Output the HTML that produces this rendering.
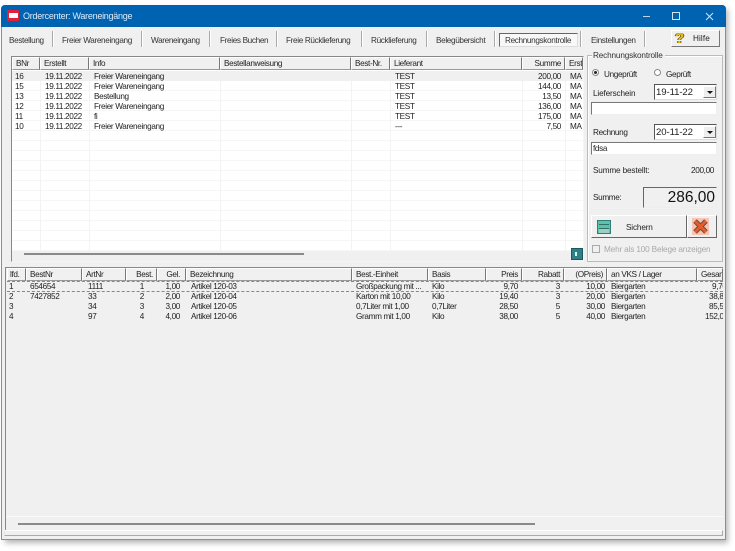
<!DOCTYPE html>
<html><head><meta charset="utf-8"><style>
html,body{margin:0;padding:0;width:735px;height:551px;background:#fff;overflow:hidden}
body{position:relative;font:8.2px/11px "Liberation Sans",sans-serif;letter-spacing:-.35px;color:#222}
#w{position:absolute;left:0;top:0;width:735px;height:551px;filter:blur(.3px);overflow:hidden}
div,span.a{position:absolute}
.t{position:absolute;white-space:nowrap}
.r{text-align:right}
.w{letter-spacing:-.15px}
.h{position:absolute;background:#f0f0f0;border:1px solid;border-color:#fff #777 #999 #fff;box-sizing:border-box;white-space:nowrap;overflow:hidden;padding-left:3px;line-height:12px}
.tab{position:absolute;top:35px;white-space:nowrap;color:#333}
.sep{position:absolute;top:31px;height:16px;width:1px;background:#aaa;border-right:1px solid #fff}
.vl{position:absolute;width:1px;background:#f3f3f3}
</style></head><body><div id="w">
<div style="left:5px;top:9px;width:723px;height:534px;background:#777;filter:blur(3px);opacity:.55"></div>
<div style="left:1px;top:5px;width:725px;height:535px;background:#f0f0f0;border:1px solid #5a9bd0;box-sizing:border-box;border-radius:4px 4px 0 0"></div>
<div style="left:1px;top:5px;width:725px;height:22px;background:#0063b1;border-radius:4px 4px 0 0"></div>
<div style="left:7px;top:10px;width:12px;height:11px;background:#e3203a;border-radius:1px"></div>
<div style="left:9px;top:13px;width:9px;height:5px;background:#fff"></div>
<span class="t" style="left:23px;top:11px;color:#dfeaf5;font-size:9px;letter-spacing:-.27px">Ordercenter: Wareneingänge</span>
<div style="left:643px;top:16px;width:7px;height:1px;background:#bcd3e8"></div>
<div style="left:672px;top:12px;width:6px;height:6px;border:1px solid #d5e3f0"></div>
<svg style="position:absolute;left:705px;top:12px" width="9" height="9"><path d="M1 1L8 8M8 1L1 8" stroke="#d5e3f0" stroke-width="1"/></svg>

<span class="tab" style="left:9px">Bestellung</span><div class="sep" style="left:52px"></div>
<span class="tab" style="left:62px">Freier Wareneingang</span><div class="sep" style="left:141px"></div>
<span class="tab" style="left:151px">Wareneingang</span><div class="sep" style="left:209px"></div>
<span class="tab" style="left:220px">Freies Buchen</span><div class="sep" style="left:276px"></div>
<span class="tab" style="left:286px">Freie Rücklieferung</span><div class="sep" style="left:361px"></div>
<span class="tab" style="left:371px">Rücklieferung</span><div class="sep" style="left:426px"></div>
<span class="tab" style="left:436px">Belegübersicht</span><div class="sep" style="left:494px"></div>
<div style="left:499px;top:33px;width:79px;height:14px;background:#f8f8f8;border:1px solid;border-color:#666 #ddd #ddd #666;box-sizing:border-box"></div>
<span class="tab" style="left:505px;top:35px">Rechnungskontrolle</span><div class="sep" style="left:580px"></div>
<span class="tab" style="left:591px">Einstellungen</span><div class="sep" style="left:644px"></div>
<div style="left:671px;top:30px;width:49px;height:17px;background:#f0f0f0;border:1px solid;border-color:#fff #777 #777 #fff;box-sizing:border-box"></div>
<span class="t" style="left:675px;top:31px;color:#e8c020;font:bold 15px/15px 'Liberation Sans',sans-serif;text-shadow:1px 0 0 #6a5a10,-1px 0 0 #6a5a10">?</span>
<span class="t" style="left:693px;top:33px;color:#222;letter-spacing:.1px">Hilfe</span>

<!-- top grid -->
<div style="left:11px;top:56px;width:573px;height:206px;background:#fff;border:1px solid;border-color:#888 #f5f5f5 #f5f5f5 #888;box-sizing:border-box"></div>
<div style="left:12px;top:81px;width:571px;height:170px;background:repeating-linear-gradient(to bottom,#fff 0,#fff 9px,#f6f6f6 9px,#f6f6f6 10px)"></div>
<div style="left:12px;top:71px;width:571px;height:10px;background:#f0f0f0"></div>
<div class="vl" style="left:40px;top:81px;height:170px"></div>
<div class="vl" style="left:89px;top:81px;height:170px"></div>
<div class="vl" style="left:220px;top:81px;height:170px"></div>
<div class="vl" style="left:351px;top:81px;height:170px"></div>
<div class="vl" style="left:390px;top:81px;height:170px"></div>
<div class="vl" style="left:522px;top:81px;height:170px"></div>
<div class="vl" style="left:565px;top:81px;height:170px"></div>
<div class="h" style="left:12px;top:57px;width:28px;height:13px">BNr</div>
<div class="h" style="left:40px;top:57px;width:49px;height:13px">Erstellt</div>
<div class="h" style="left:89px;top:57px;width:131px;height:13px">Info</div>
<div class="h" style="left:220px;top:57px;width:131px;height:13px">Bestellanweisung</div>
<div class="h" style="left:351px;top:57px;width:39px;height:13px">Best-Nr.</div>
<div class="h" style="left:390px;top:57px;width:132px;height:13px">Lieferant</div>
<div class="h" style="left:522px;top:57px;width:43px;height:13px;text-align:right;padding-right:3px">Summe</div>
<div class="h" style="left:565px;top:57px;width:18px;height:13px">Erst</div>

<span class="t" style="left:15px;top:71px">16</span><span class="t" style="left:45px;top:71px">19.11.2022</span><span class="t" style="left:94px;top:71px">Freier Wareneingang</span><span class="t" style="left:395px;top:71px">TEST</span><span class="t r" style="right:174px;top:71px">200,00</span><span class="t" style="left:570px;top:71px">MA</span>
<span class="t" style="left:15px;top:81px">15</span><span class="t" style="left:45px;top:81px">19.11.2022</span><span class="t" style="left:94px;top:81px">Freier Wareneingang</span><span class="t" style="left:395px;top:81px">TEST</span><span class="t r" style="right:174px;top:81px">144,00</span><span class="t" style="left:570px;top:81px">MA</span>
<span class="t" style="left:15px;top:91px">13</span><span class="t" style="left:45px;top:91px">19.11.2022</span><span class="t" style="left:94px;top:91px">Bestellung</span><span class="t" style="left:395px;top:91px">TEST</span><span class="t r" style="right:174px;top:91px">13,50</span><span class="t" style="left:570px;top:91px">MA</span>
<span class="t" style="left:15px;top:101px">12</span><span class="t" style="left:45px;top:101px">19.11.2022</span><span class="t" style="left:94px;top:101px">Freier Wareneingang</span><span class="t" style="left:395px;top:101px">TEST</span><span class="t r" style="right:174px;top:101px">136,00</span><span class="t" style="left:570px;top:101px">MA</span>
<span class="t" style="left:15px;top:111px">11</span><span class="t" style="left:45px;top:111px">19.11.2022</span><span class="t" style="left:94px;top:111px">fi</span><span class="t" style="left:395px;top:111px">TEST</span><span class="t r" style="right:174px;top:111px">175,00</span><span class="t" style="left:570px;top:111px">MA</span>
<span class="t" style="left:15px;top:121px">10</span><span class="t" style="left:45px;top:121px">19.11.2022</span><span class="t" style="left:94px;top:121px">Freier Wareneingang</span><span class="t" style="left:395px;top:121px">---</span><span class="t r" style="right:174px;top:121px">7,50</span><span class="t" style="left:570px;top:121px">MA</span>

<div style="left:12px;top:251px;width:571px;height:10px;background:#f0f0f0"></div>
<div style="left:24px;top:253px;width:280px;height:2px;background:#8a8a8a"></div>
<div style="left:571px;top:248px;width:12px;height:12px;background:#2f7f86;border:1px solid #1c5a60;box-sizing:border-box"></div>
<div style="left:575px;top:252px;width:2px;height:4px;background:#cfe"></div>

<!-- right panel -->
<div style="left:587px;top:55px;width:136px;height:207px;border:1px solid #bbb;box-shadow:inset 1px 1px 0 #fff;box-sizing:border-box"></div>
<span class="t w" style="left:592px;top:50px;background:#f0f0f0;padding:0 2px 0 1px;color:#333">Rechnungskontrolle</span>
<div style="left:592px;top:69px;width:7px;height:7px;border-radius:50%;background:#fff;border:1px solid #888;box-sizing:border-box"></div>
<div style="left:594px;top:71px;width:3px;height:3px;border-radius:50%;background:#222"></div>
<span class="t" style="left:604px;top:69px">Ungeprüft</span>
<div style="left:654px;top:69px;width:7px;height:7px;border-radius:50%;background:#fff;border:1px solid #888;box-sizing:border-box"></div>
<span class="t" style="left:666px;top:69px">Geprüft</span>
<span class="t w" style="left:593px;top:88px">Lieferschein</span>
<div style="left:654px;top:84px;width:63px;height:16px;background:#fff;border:1px solid;border-color:#555 #ddd #ddd #555;box-sizing:border-box"></div>
<span class="t" style="left:656px;top:87px;font-size:9.6px;letter-spacing:-.1px">19-11-22</span>
<div style="left:703px;top:86px;width:13px;height:12px;background:#eee;border:1px solid;border-color:#fff #777 #777 #fff;box-sizing:border-box"></div>
<div style="left:707px;top:91px;border:3px solid transparent;border-top:3px solid #111;border-bottom:0"></div>
<div style="left:591px;top:102px;width:126px;height:13px;background:#fff;border:1px solid;border-color:#777 #eee #eee #777;box-sizing:border-box"></div>
<span class="t" style="left:593px;top:127px">Rechnung</span>
<div style="left:654px;top:124px;width:63px;height:16px;background:#fff;border:1px solid;border-color:#555 #ddd #ddd #555;box-sizing:border-box"></div>
<span class="t" style="left:656px;top:127px;font-size:9.6px;letter-spacing:-.1px">20-11-22</span>
<div style="left:703px;top:126px;width:13px;height:12px;background:#eee;border:1px solid;border-color:#fff #777 #777 #fff;box-sizing:border-box"></div>
<div style="left:707px;top:131px;border:3px solid transparent;border-top:3px solid #111;border-bottom:0"></div>
<div style="left:591px;top:142px;width:126px;height:13px;background:#fff;border:1px solid;border-color:#777 #eee #eee #777;box-sizing:border-box"></div>
<span class="t" style="left:593px;top:143px">fdsa</span>
<span class="t w" style="left:593px;top:165px">Summe bestellt:</span>
<span class="t r" style="right:21px;top:165px">200,00</span>
<span class="t" style="left:593px;top:192px">Summe:</span>
<div style="left:643px;top:187px;width:74px;height:21px;background:#f0f0f0;border:1px solid;border-color:#666 #eee #eee #666;box-sizing:border-box"></div>
<span class="t r" style="right:20px;top:190px;font-size:15.5px;line-height:16px;letter-spacing:0;color:#111">286,00</span>
<div style="left:591px;top:215px;width:96px;height:23px;background:#f0f0f0;border:1px solid;border-color:#fff #666 #666 #fff;box-sizing:border-box"></div>
<div style="left:597px;top:220px;width:14px;height:14px;background:#5fc0a8;border:1px solid #2f7f7a;box-sizing:border-box"></div>
<div style="left:599px;top:224px;width:10px;height:1px;background:#2f6f6a"></div>
<div style="left:599px;top:228px;width:10px;height:4px;background:#9ccfc0;border-top:1px solid #2f6f6a"></div>
<span class="t w" style="left:626px;top:222px">Sichern</span>
<div style="left:687px;top:215px;width:30px;height:23px;background:#f0f0f0;border:1px solid;border-color:#fff #666 #666 #fff;box-sizing:border-box"></div>
<svg style="position:absolute;left:692px;top:218px" width="17" height="17"><rect width="17" height="17" fill="#f7c4b4"/><path d="M3 3L14 14M14 3L3 14" stroke="#555" stroke-width="5"/><path d="M3 3L14 14M14 3L3 14" stroke="#f05a20" stroke-width="3"/></svg>
<div style="left:592px;top:245px;width:8px;height:8px;border:1px solid #aaa;box-sizing:border-box"></div>
<span class="t w" style="left:604px;top:244px;color:#a8a8a8">Mehr als 100 Belege anzeigen</span>

<!-- bottom grid -->
<div style="left:5px;top:267px;width:718px;height:264px;background:#f0f0f0;border-top:1px solid #888;border-left:1px solid #888;box-sizing:border-box"></div>
<div class="h" style="left:7px;top:268px;width:19px;height:13px;padding-left:2px">lfd.</div>
<div class="h" style="left:26px;top:268px;width:56px;height:13px">BestNr</div>
<div class="h" style="left:82px;top:268px;width:44px;height:13px">ArtNr</div>
<div class="h" style="left:126px;top:268px;width:31px;height:13px;text-align:right;padding-right:3px">Best.</div>
<div class="h" style="left:157px;top:268px;width:29px;height:13px;text-align:right;padding-right:5px">Gel.</div>
<div class="h" style="left:186px;top:268px;width:166px;height:13px">Bezeichnung</div>
<div class="h" style="left:352px;top:268px;width:76px;height:13px">Best.-Einheit</div>
<div class="h" style="left:428px;top:268px;width:58px;height:13px">Basis</div>
<div class="h" style="left:486px;top:268px;width:36px;height:13px;text-align:right;padding-right:3px">Preis</div>
<div class="h" style="left:522px;top:268px;width:42px;height:13px;text-align:right;padding-right:3px">Rabatt</div>
<div class="h" style="left:564px;top:268px;width:43px;height:13px;text-align:right;padding-right:3px">(OPreis)</div>
<div class="h" style="left:607px;top:268px;width:90px;height:13px">an VKS / Lager</div>
<div class="h" style="left:697px;top:268px;width:26px;height:13px">Gesamt</div>
<div style="left:7px;top:281px;width:716px;height:11px;border-top:1px dashed #888;border-bottom:1px dashed #888;box-sizing:border-box"></div>

<span class="t" style="left:9px;top:281px">1</span><span class="t" style="left:30px;top:281px">654654</span><span class="t" style="left:88px;top:281px">1111</span><span class="t r" style="right:591px;top:281px">1</span><span class="t r" style="right:555px;top:281px">1,00</span><span class="t" style="left:191px;top:281px">Artikel 120-03</span><span class="t" style="left:356px;top:281px">Großpackung mit ...</span><span class="t" style="left:432px;top:281px">Kilo</span><span class="t r" style="right:217px;top:281px">9,70</span><span class="t r" style="right:175px;top:281px">3</span><span class="t r" style="right:130px;top:281px">10,00</span><span class="t" style="left:611px;top:281px">Biergarten</span>
<span class="t" style="left:9px;top:291px">2</span><span class="t" style="left:30px;top:291px">7427852</span><span class="t" style="left:88px;top:291px">33</span><span class="t r" style="right:591px;top:291px">2</span><span class="t r" style="right:555px;top:291px">2,00</span><span class="t" style="left:191px;top:291px">Artikel 120-04</span><span class="t" style="left:356px;top:291px">Karton mit 10,00</span><span class="t" style="left:432px;top:291px">Kilo</span><span class="t r" style="right:217px;top:291px">19,40</span><span class="t r" style="right:175px;top:291px">3</span><span class="t r" style="right:130px;top:291px">20,00</span><span class="t" style="left:611px;top:291px">Biergarten</span>
<span class="t" style="left:9px;top:301px">3</span><span class="t" style="left:88px;top:301px">34</span><span class="t r" style="right:591px;top:301px">3</span><span class="t r" style="right:555px;top:301px">3,00</span><span class="t" style="left:191px;top:301px">Artikel 120-05</span><span class="t" style="left:356px;top:301px">0,7Liter mit 1,00</span><span class="t" style="left:432px;top:301px">0,7Liter</span><span class="t r" style="right:217px;top:301px">28,50</span><span class="t r" style="right:175px;top:301px">5</span><span class="t r" style="right:130px;top:301px">30,00</span><span class="t" style="left:611px;top:301px">Biergarten</span>
<span class="t" style="left:9px;top:311px">4</span><span class="t" style="left:88px;top:311px">97</span><span class="t r" style="right:591px;top:311px">4</span><span class="t r" style="right:555px;top:311px">4,00</span><span class="t" style="left:191px;top:311px">Artikel 120-06</span><span class="t" style="left:356px;top:311px">Gramm mit 1,00</span><span class="t" style="left:432px;top:311px">Kilo</span><span class="t r" style="right:217px;top:311px">38,00</span><span class="t r" style="right:175px;top:311px">5</span><span class="t r" style="right:130px;top:311px">40,00</span><span class="t" style="left:611px;top:311px">Biergarten</span>
<div style="left:697px;top:281px;width:26px;height:42px;overflow:hidden">
<span class="t" style="left:15px;top:0">9,70</span>
<span class="t" style="left:12px;top:10px">38,80</span>
<span class="t" style="left:12px;top:20px">85,50</span>
<span class="t" style="left:8px;top:30px">152,00</span>
</div>

<div style="left:6px;top:516px;width:717px;height:1px;background:#fafafa"></div>
<div style="left:18px;top:523px;width:517px;height:2px;background:#8a8a8a"></div>
<div style="left:4px;top:530px;width:719px;height:6px;background:#f0f0f0;border:1px solid;border-color:#fff #aaa #aaa #e8e8e8;box-sizing:border-box"></div>
</div></body></html>
